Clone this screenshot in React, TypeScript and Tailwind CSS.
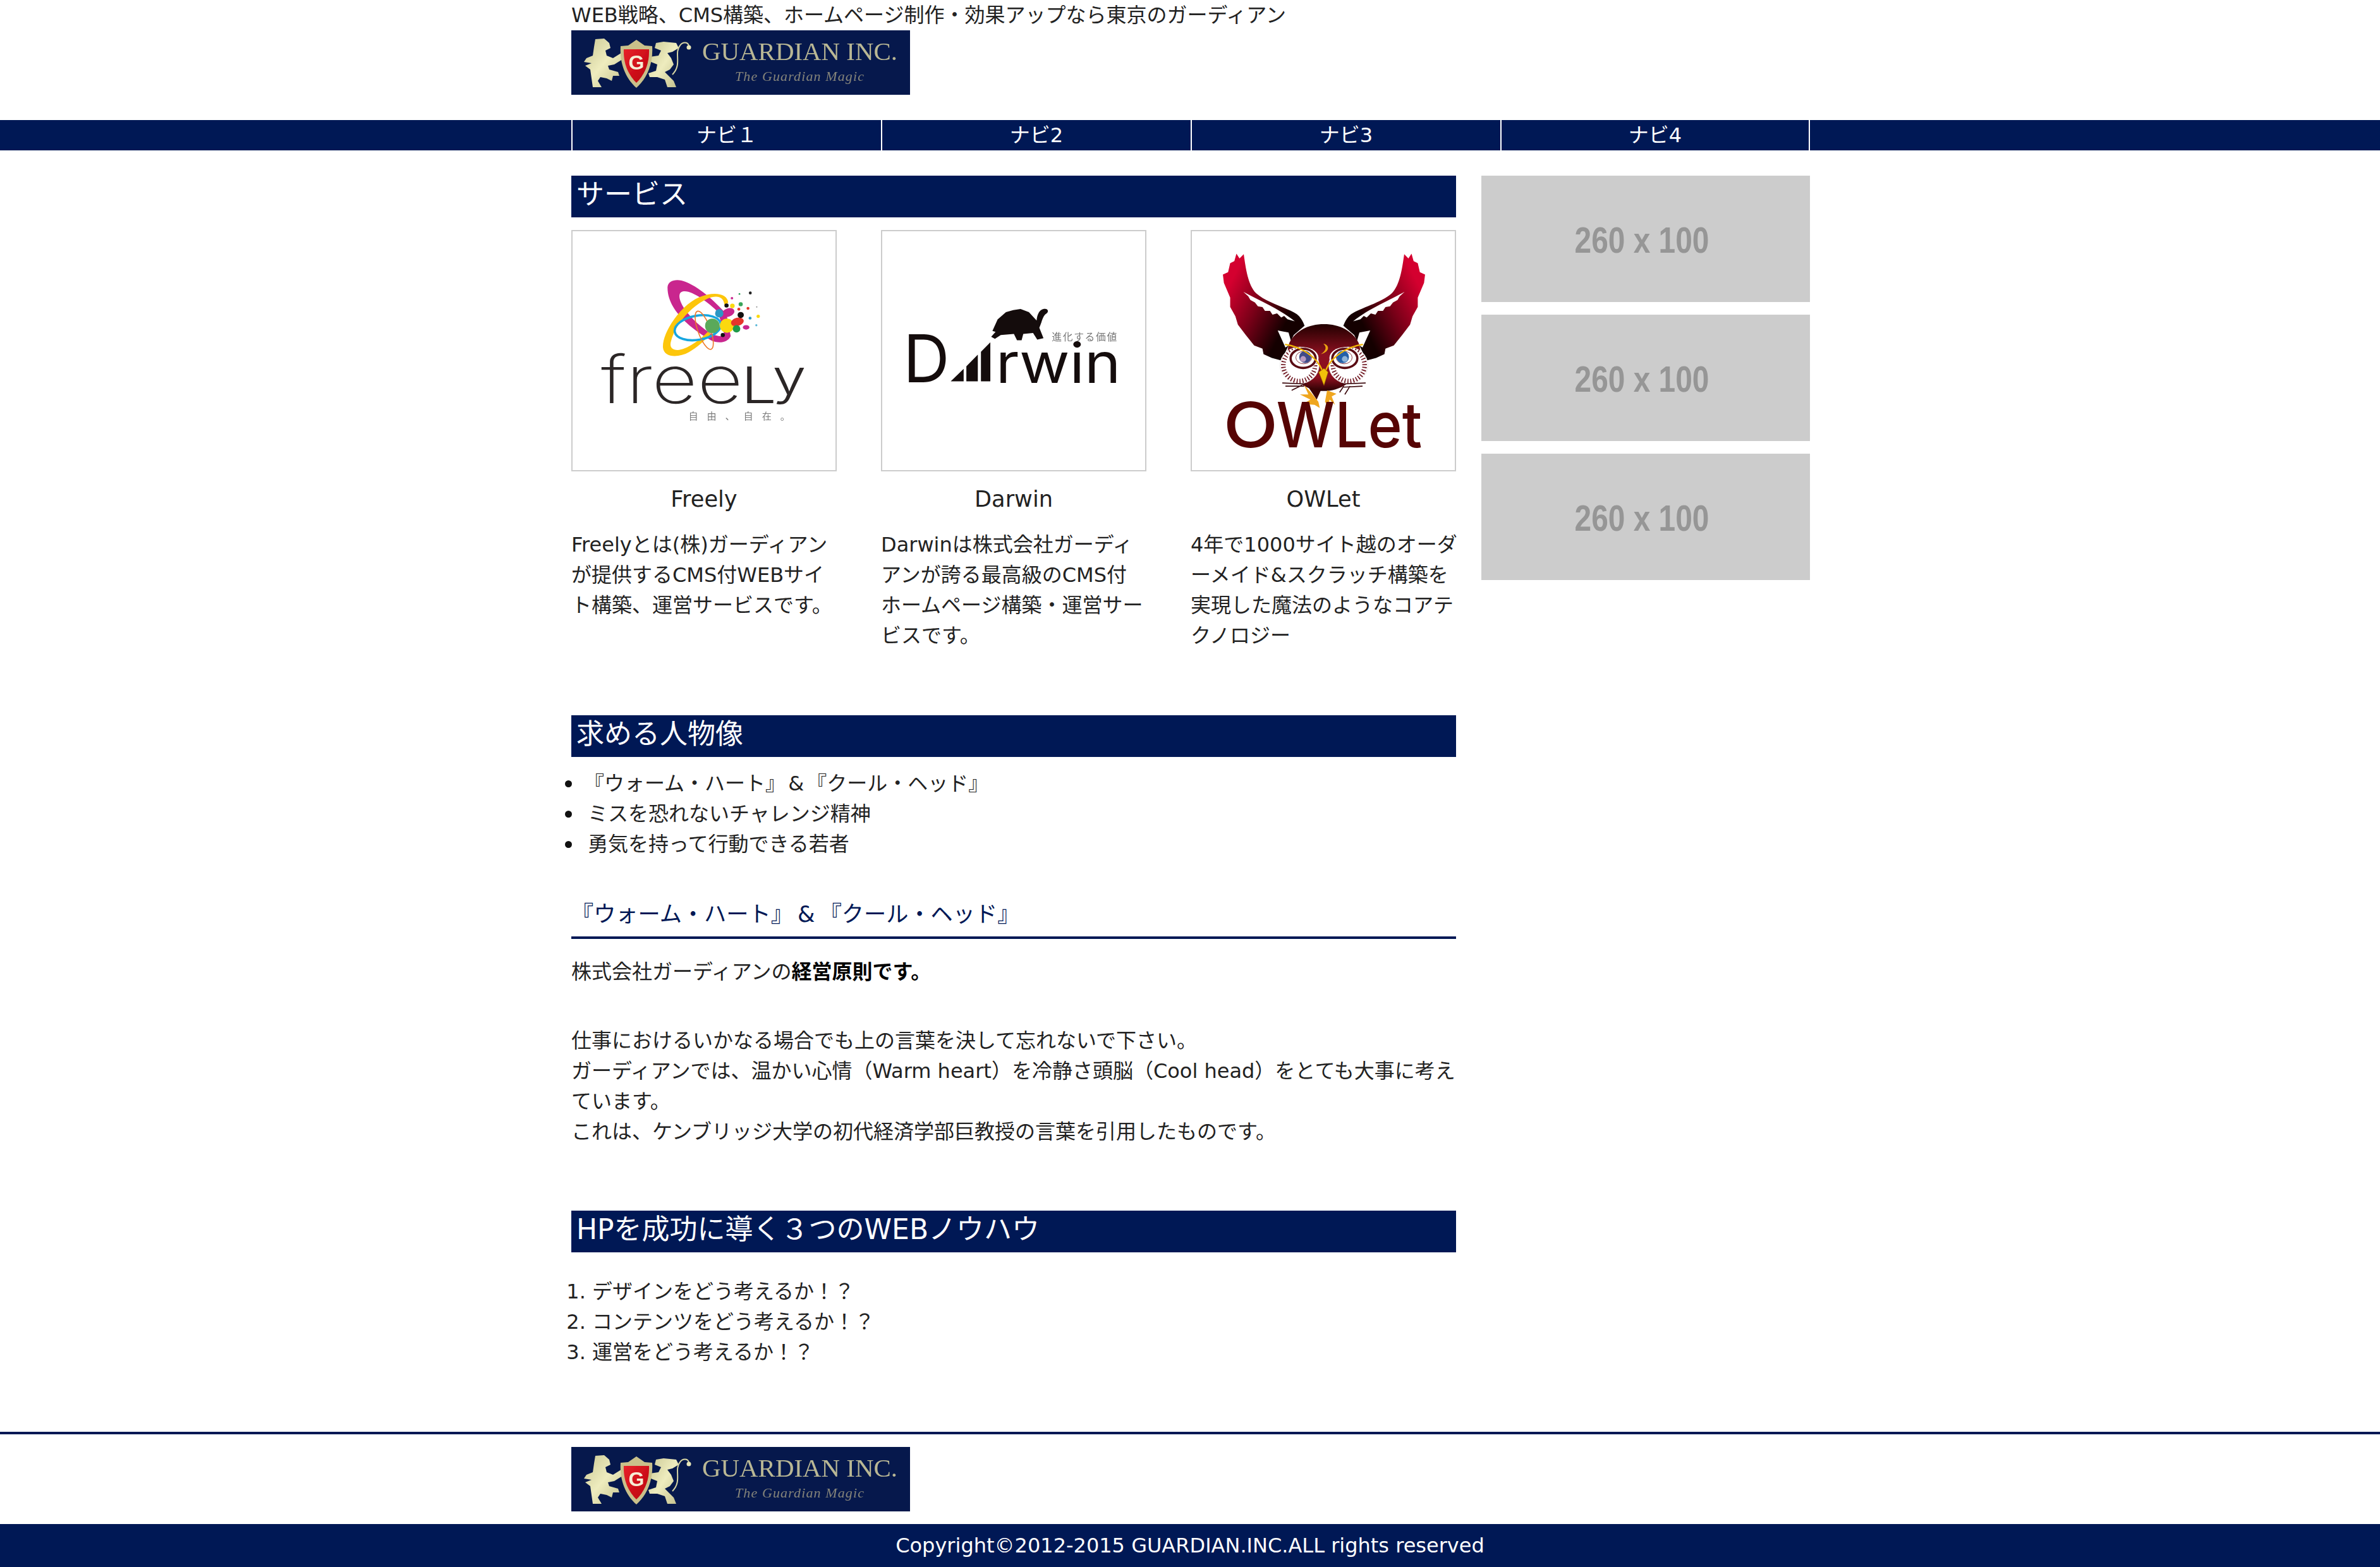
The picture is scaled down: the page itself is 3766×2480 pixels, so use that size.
import React from 'react'

const navItems = ['ナビ１', 'ナビ2', 'ナビ3', 'ナビ4']

const services = [
  { name: 'Freely', text: 'Freelyとは(株)ガーディアンが提供するCMS付WEBサイト構築、運営サービスです。', textWidth: 'w-[420px]', logo: <FreelyLogo /> },
  { name: 'Darwin', text: 'Darwinは株式会社ガーディアンが誇る最高級のCMS付ホームページ構築・運営サービスです。', textWidth: 'w-[420px]', logo: <DarwinLogo /> },
  { name: 'OWLet', text: '4年で1000サイト越のオーダーメイド&スクラッチ構築を実現した魔法のようなコアテクノロジー', textWidth: 'w-[426px]', logo: <OwletLogo /> },
]

const qualities = ['『ウォーム・ハート』 & 『クール・ヘッド』', 'ミスを恐れないチャレンジ精神', '勇気を持って行動できる若者']

function GuardianLogo() {
  return (
    <svg viewBox="0 0 536 102" className="block w-[536px] h-[102px]">
      <defs>
        <linearGradient id="gold" x1="0" y1="0" x2="1" y2="1">
          <stop offset="0" stopColor="#c9c794" />
          <stop offset="0.5" stopColor="#eeecbe" />
          <stop offset="1" stopColor="#c2bf8c" />
        </linearGradient>
        <linearGradient id="red" x1="0" y1="0" x2="1" y2="1">
          <stop offset="0" stopColor="#e8222a" />
          <stop offset="1" stopColor="#b8000c" />
        </linearGradient>
        <filter id="soft">
          <feGaussianBlur stdDeviation="0.7" />
        </filter>
      </defs>
      <rect width="536" height="102" fill="#06184c" />
      <g filter="url(#soft)">
        {/* left lion */}
        <path
          fill="url(#gold)"
          d="M38 14 L52 13 L60 20 L62 28 L54 32 L56 40 L66 44 L82 34 L84 44 L68 54 L58 56 L60 62 L74 66 L76 72 L66 72 L64 80 L56 76 L46 74 L42 80 L48 90 L34 90 L32 76 L30 62 L22 56 L32 52 L20 50 L24 44 L34 40 L36 26 Z"
        />
        {/* right lion and tail */}
        <path
          fill="url(#gold)"
          d="M134 20 L146 18 L166 20 L170 28 L160 34 L152 36 L158 44 L162 54 L156 62 L148 66 L162 80 L166 90 L152 90 L148 78 L136 74 L124 74 L122 68 L134 64 L136 54 L126 50 L124 42 L138 40 L142 32 L132 28 Z"
        />
        <path d="M160 70 C176 54 162 36 172 24 C176 18 184 18 186 24" fill="none" stroke="#d8d6a4" strokeWidth="2" />
        <circle cx="186" cy="27" r="3.5" fill="#e8e6b8" />
        {/* shield */}
        <path fill="#c9c08a" d="M78 25 L90 24 L103 15 L116 24 L128 25 C130 55 118 78 103 91 C88 78 76 55 78 25 Z" />
        <path fill="url(#red)" d="M83 30 L123 30 C124 55 114 72 103 83 C92 72 82 55 83 30 Z" />
        <text x="103" y="62" textAnchor="middle" fontFamily="Liberation Sans" fontWeight="700" fontSize="32" fill="#f6efd6">
          G
        </text>
        <text x="207" y="47" fontFamily="Liberation Serif" fontSize="39" fill="#b9b794" textLength="309" lengthAdjust="spacingAndGlyphs">
          GUARDIAN INC.
        </text>
        <text x="259" y="80" fontFamily="Liberation Serif" fontStyle="italic" fontSize="22" fill="#85847a" textLength="204" lengthAdjust="spacing">
          The Guardian Magic
        </text>
      </g>
    </svg>
  )
}

function FreelyLogo() {
  return (
    <svg viewBox="72 42 1260 1146" className="block w-full h-full blur-[0.5px]">
      <path
        fillRule="evenodd"
        fill="#c9268e"
        d="M527 310 C530 275 575 268 615 285 C690 315 770 395 810 440 L830 545 C815 578 770 582 735 565 C640 510 525 420 527 310 Z M585 345 C575 385 640 470 730 530 C760 545 790 550 800 540 L770 430 C725 385 650 330 610 330 C595 330 588 335 585 345 Z"
      />
      <path
        fill="#fdc60b"
        fillRule="evenodd"
        d="M818 385 C815 340 750 330 680 358 C590 395 500 530 505 600 C510 650 580 650 630 622 C670 600 700 570 735 535 L720 525 C680 565 620 610 575 612 C545 612 535 595 545 565 C565 490 640 400 720 365 C760 348 795 352 800 395 Z"
      />
      <ellipse cx="672" cy="505" rx="112" ry="58" transform="rotate(-10 672 505)" fill="none" stroke="#17a6e0" strokeWidth="11" />
      <ellipse cx="703" cy="517" rx="30" ry="97" transform="rotate(-20 703 517)" fill="none" stroke="#ee7a2b" strokeWidth="5" />
      <circle cx="742" cy="496" r="35" fill="#5aa95a" />
      <circle cx="812" cy="495" r="34" fill="#fbd90f" />
      <ellipse cx="818" cy="432" rx="31" ry="20" transform="rotate(-20 818 432)" fill="#c9268e" />
      <circle cx="775" cy="436" r="20" fill="#2a97c4" />
      <ellipse cx="862" cy="477" rx="31" ry="20" transform="rotate(-15 862 477)" fill="#e6352b" />
      <circle cx="858" cy="510" r="18" fill="#1f9a4a" />
      <ellipse cx="904" cy="503" rx="16" ry="11" fill="#c9268e" />
      <circle cx="838" cy="400" r="11" fill="#fbd90f" />
      <circle cx="810" cy="398" r="10" fill="#111" />
      <circle cx="878" cy="444" r="15" fill="#111" />
      <circle cx="792" cy="540" r="10" fill="#111" />
      <circle cx="924" cy="338" r="7" fill="#222" />
      <circle cx="836" cy="363" r="6" fill="#c9268e" />
      <circle cx="872" cy="343" r="4" fill="#1f9a4a" />
      <circle cx="878" cy="392" r="10" fill="#3aa45a" />
      <circle cx="869" cy="416" r="7" fill="#e6352b" />
      <circle cx="913" cy="412" r="7" fill="#e6352b" />
      <circle cx="955" cy="405" r="3" fill="#888" />
      <circle cx="923" cy="459" r="7" fill="#2a97c4" />
      <circle cx="962" cy="450" r="8" fill="#fbd90f" />
      <circle cx="953" cy="493" r="5" fill="#5bb8d8" />
      <g fontFamily="Inter" fill="#2b2626">
        <text x="208" y="866" fontWeight="200" fontSize="316" textLength="680" lengthAdjust="spacingAndGlyphs">
          free
        </text>
        <text x="880" y="866" fontWeight="300" fontSize="240" textLength="170" lengthAdjust="spacingAndGlyphs">
          L
        </text>
        <text x="1030" y="823" fontWeight="300" fontSize="236" textLength="162" lengthAdjust="spacingAndGlyphs">
          y
        </text>
      </g>
      <text x="628" y="946" fontFamily="Noto Sans CJK JP" fontSize="46" fill="#7c7c7c" letterSpacing="42">
        自由、自在。
      </text>
    </svg>
  )
}

function DarwinLogo() {
  return (
    <svg viewBox="72 42 1260 1146" className="block w-full h-full blur-[0.5px]">
      <path
        fill="#140c0c"
        d="M600 520 L625 465 L665 430 L700 420 L735 415 L775 430 L812 470 C815 440 825 418 848 414 C868 412 872 428 858 438 C842 448 838 475 825 505 L845 555 L815 562 L795 530 L748 535 L740 565 L718 565 L703 535 L640 540 L612 558 L594 548 L615 525 Z"
      />
      <text x="172" y="768" fontFamily="Inter" fontWeight="400" fontSize="318" fill="#140c0c" textLength="222" lengthAdjust="spacingAndGlyphs">
        D
      </text>
      <path fill="#140c0c" d="M400 762 L462 702 L462 762 Z M475 690 L530 634 L530 762 L475 762 Z M545 620 L590 575 L590 762 L545 762 Z" />
      <text transform="translate(616 770) scale(1 0.92)" fontFamily="Inter" fontWeight="400" fontSize="290" fill="#140c0c" textLength="600" lengthAdjust="spacingAndGlyphs">
        rwin
      </text>
      <text x="885" y="566" fontFamily="Noto Sans CJK JP" fontSize="48" fill="#777" textLength="312">
        進化する価値
      </text>
    </svg>
  )
}

function OwlWing() {
  return (
    <>
      <path
        fill="url(#wing)"
        d="M255 150 L270 172 L290 152 C300 220 310 300 350 340 C400 385 500 410 545 440 C565 455 575 478 582 495 L530 540 L470 662 L425 650 L385 632 L380 605 L340 590 L300 540 L262 490 L250 450 L225 405 L225 360 L195 290 L190 250 L215 238 L225 195 L245 185 Z"
      />
      <path
        fill="#fff"
        d="M288 332 C350 368 460 412 535 474 L500 464 L484 448 L470 456 L450 436 L428 442 L416 424 L392 424 L380 406 L358 402 L344 384 L322 372 L312 354 Z"
      />
      <path fill="#fff" d="M453 518 L505 528 L520 580 L490 600 Z" />
    </>
  )
}

function OwlFace() {
  return (
    <>
      <ellipse cx="558" cy="685" rx="94" ry="88" fill="#fff" stroke="#ddd" strokeWidth="2" />
      <circle cx="556" cy="685" r="76" fill="none" stroke="#6e1620" strokeWidth="22" strokeDasharray="5 9" />
      <ellipse cx="575" cy="650" rx="74" ry="52" fill="#fff" />
      <ellipse cx="575" cy="652" rx="60" ry="46" fill="none" stroke="#5a0c14" strokeWidth="11" />
      <ellipse cx="578" cy="648" rx="38" ry="30" fill="none" stroke="#8a3a44" strokeWidth="3" />
    </>
  )
}

function OwletLogo() {
  return (
    <svg viewBox="42 42 1260 1146" className="block w-full h-full blur-[0.5px]">
      <defs>
        <linearGradient id="wing" gradientUnits="userSpaceOnUse" x1="210" y1="320" x2="500" y2="470">
          <stop offset="0" stopColor="#d4002f" />
          <stop offset="0.5" stopColor="#7a0018" />
          <stop offset="1" stopColor="#140000" />
        </linearGradient>
        <linearGradient id="head" x1="0" y1="0" x2="0" y2="1">
          <stop offset="0" stopColor="#220000" />
          <stop offset="0.45" stopColor="#8c1020" />
          <stop offset="0.8" stopColor="#8c0f1e" />
          <stop offset="1" stopColor="#2a0204" />
        </linearGradient>
      </defs>
      <OwlWing />
      <g transform="translate(1350 0) scale(-1 1)">
        <OwlWing />
      </g>
      <path
        fill="url(#head)"
        d="M675 488 C750 488 810 520 840 575 C860 620 850 720 790 770 C750 800 710 808 675 808 C640 808 600 800 560 770 C500 720 490 620 510 575 C540 520 600 488 675 488 Z"
      />
      <OwlFace />
      <g transform="translate(1350 0) scale(-1 1)">
        <OwlFace />
      </g>
      <circle cx="585" cy="645" r="29" fill="#3f4a88" />
      <circle cx="575" cy="655" r="14" fill="#b89ac0" />
      <circle cx="765" cy="645" r="30" fill="#2460a8" />
      <circle cx="775" cy="655" r="14" fill="#8fb4d8" />
      <path d="M488 585 C560 595 640 640 668 712" fill="none" stroke="#f2b705" strokeWidth="7" />
      <path d="M862 585 C790 595 710 640 682 712" fill="none" stroke="#f2b705" strokeWidth="7" />
      <path fill="#f2c10a" stroke="#8a5a00" strokeWidth="2" d="M650 718 L675 700 L695 718 L675 782 Z" />
      <path fill="#e9a311" d="M672 582 C700 585 708 620 660 632 C682 618 692 600 672 582 Z" />
      <g fill="none" stroke="#3c0a0e" strokeWidth="5">
        <path d="M475 770 L590 775 M490 785 L580 785 M520 805 L570 780" />
        <path d="M875 770 L760 775 M860 785 L770 790 M775 825 L800 785 M750 815 L770 785" />
      </g>
      <path fill="#3c0204" d="M600 790 L660 805 L640 850 L620 820 Z" />
      <path
        fill="#efa61f"
        d="M580 780 L612 815 L648 860 L655 890 L630 875 L575 870 L610 850 L560 825 L600 825 Z M690 805 L735 822 L712 835 L728 875 L702 850 L695 885 L680 860 Z"
      />
      <g fontFamily="Inter" fontWeight="500" fontSize="300" fill="#560404">
        <text x="192" y="1078" textLength="262" lengthAdjust="spacingAndGlyphs">
          O
        </text>
        <text x="446" y="1078" textLength="700" lengthAdjust="spacingAndGlyphs">
          WLet
        </text>
      </g>
    </svg>
  )
}

function SectionBar({ children }: { children: React.ReactNode }) {
  return <h2 className="h-[66px] bg-[#001855] pl-2 text-[44px] leading-[60px] font-normal text-white">{children}</h2>
}

function Placeholder() {
  return (
    <div className="flex h-[200px] items-center justify-center bg-[#cccccc] pt-1 pr-3">
      <span className="inline-block scale-x-[0.825] font-['Liberation_Sans',sans-serif] text-[58px] font-bold text-[#969696]">260 x 100</span>
    </div>
  )
}

export default function App() {
  return (
    <div className="min-h-[2480px] bg-white font-['DejaVu_Sans','Noto_Sans_CJK_JP',sans-serif] text-[32px] leading-[48px] text-[#222222]">
      <header className="h-[190px]">
        <div className="ml-[904px]">
          <p className="leading-[48px]">WEB戦略、CMS構築、ホームページ制作・効果アップなら東京のガーディアン</p>
          <GuardianLogo />
        </div>
      </header>

      <nav className="h-[48px] bg-[#001855]">
        <ul className="ml-[904px] flex text-white">
          {navItems.map((item, i) => (
            <li
              key={item}
              className={`h-[48px] w-[490px] border-l-2 border-white text-center ${i === navItems.length - 1 ? 'border-r-2' : ''}`}
            >
              {item}
            </li>
          ))}
        </ul>
      </nav>

      <main className="ml-[904px] flex w-[1960px] gap-[40px] pt-[40px]">
        <div className="w-[1400px]">
          <SectionBar>サービス</SectionBar>
          <div className="mt-[20px] grid grid-cols-3 gap-[70px]">
            {services.map((s) => (
              <div key={s.name} className="w-[420px]">
                <div className="h-[382px] border-2 border-[#cccccc]">{s.logo}</div>
                <h3 className="mt-[20px] text-center text-[35.2px] leading-[48px] font-normal">{s.name}</h3>
                <p className={`mt-[24px] ${s.textWidth}`}>{s.text}</p>
              </div>
            ))}
          </div>

          <div className="mt-[102px]">
            <SectionBar>求める人物像</SectionBar>
          </div>
          <ul className="mt-[18px] pl-[26px] [word-spacing:-6px]">
            {qualities.map((q, i) => (
              <li key={q} className="flex items-center">
                <span className="mr-[25px] -ml-[36px] h-[11px] w-[11px] rounded-full bg-[#111111]" />
                <span className={i === 0 ? '-ml-[6px]' : ''}>{q}</span>
              </li>
            ))}
          </ul>

          <h3 className="mt-[55px] border-b-4 border-[#001855] pb-[3px] text-[35.2px] leading-[64px] font-normal text-[#001855] [word-spacing:-4px]">
            『ウォーム・ハート』 & 『クール・ヘッド』
          </h3>
          <p className="mt-[28px]">
            株式会社ガーディアンの<strong className="font-bold text-black">経営原則です。</strong>
          </p>
          <p className="mt-[61px]">
            仕事におけるいかなる場合でも上の言葉を決して忘れないで下さい。
            <br />
            ガーディアンでは、温かい心情（Warm heart）を冷静さ頭脳（Cool head）をとても大事に考えています。
            <br />
            これは、ケンブリッジ大学の初代経済学部巨教授の言葉を引用したものです。
          </p>

          <div className="mt-[101px]">
            <SectionBar>HPを成功に導く３つのWEBノウハウ</SectionBar>
          </div>
          <ol className="mt-[38px] list-decimal pl-[33px]">
            <li>デザインをどう考えるか！？</li>
            <li>コンテンツをどう考えるか！？</li>
            <li>運営をどう考えるか！？</li>
          </ol>
        </div>

        <aside className="flex w-[520px] flex-col gap-[20px]">
          <Placeholder />
          <Placeholder />
          <Placeholder />
        </aside>
      </main>

      <footer className="mt-[102px] border-t-4 border-[#001855]">
        <div className="ml-[904px] py-[20px]">
          <GuardianLogo />
        </div>
        <p className="h-[68px] bg-[#001855] text-center leading-[68px] text-white">Copyright©2012-2015 GUARDIAN.INC.ALL rights reserved</p>
      </footer>
    </div>
  )
}
